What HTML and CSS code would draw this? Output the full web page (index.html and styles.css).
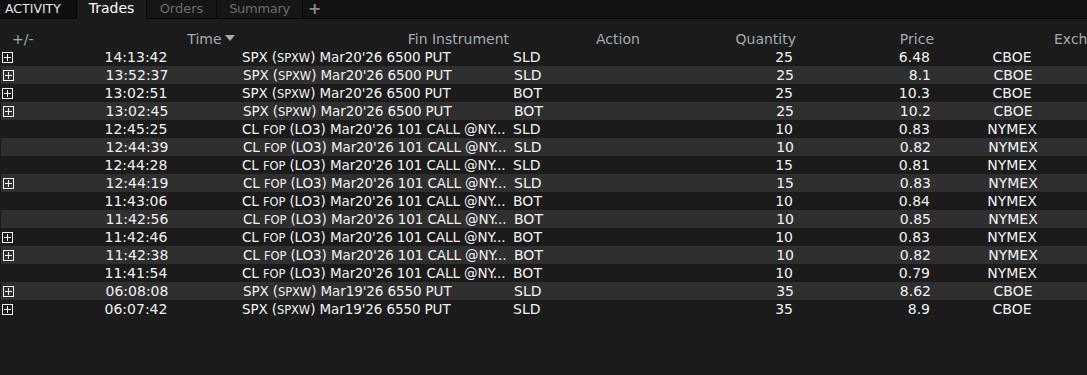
FILE: index.html
```html
<!DOCTYPE html>
<html lang="en">
<head>
  <meta charset="UTF-8">
  <title>Activity - Trades</title>
  <link rel="stylesheet" href="styles.css">
</head>
<body>
  <div class="tabbar">
    <div class="tab title">ACTIVITY</div>
    <div class="tab active">Trades</div>
    <div class="tab">Orders</div>
    <div class="tab wide">Summary</div>
    <div class="tab add">+</div>
  </div>

  <div class="grid">
    <div class="row head">
      <div class="c exp">+/-</div>
      <div class="c time">Time <span class="sort"></span></div>
      <div class="c inst">Fin Instrument</div>
      <div class="c act">Action</div>
      <div class="c qty">Quantity</div>
      <div class="c price">Price</div>
      <div class="c exch">Exchange</div>
    </div>

    <div class="row"><div class="c exp"><span class="plus"></span></div><div class="c time">14:13:42</div><div class="c inst">SPX (<span class="sc">SPXW</span>) Mar20'26 6500 PUT</div><div class="c act">SLD</div><div class="c qty">25</div><div class="c price">6.48</div><div class="c exch">CBOE</div></div>
    <div class="row"><div class="c exp"><span class="plus"></span></div><div class="c time">13:52:37</div><div class="c inst">SPX (<span class="sc">SPXW</span>) Mar20'26 6500 PUT</div><div class="c act">SLD</div><div class="c qty">25</div><div class="c price">8.1</div><div class="c exch">CBOE</div></div>
    <div class="row"><div class="c exp"><span class="plus"></span></div><div class="c time">13:02:51</div><div class="c inst">SPX (<span class="sc">SPXW</span>) Mar20'26 6500 PUT</div><div class="c act">BOT</div><div class="c qty">25</div><div class="c price">10.3</div><div class="c exch">CBOE</div></div>
    <div class="row"><div class="c exp"><span class="plus"></span></div><div class="c time">13:02:45</div><div class="c inst">SPX (<span class="sc">SPXW</span>) Mar20'26 6500 PUT</div><div class="c act">BOT</div><div class="c qty">25</div><div class="c price">10.2</div><div class="c exch">CBOE</div></div>
    <div class="row"><div class="c exp"></div><div class="c time">12:45:25</div><div class="c inst">CL <span class="sc">FOP</span> (LO3) Mar20'26 101 CALL @NY...</div><div class="c act">SLD</div><div class="c qty">10</div><div class="c price">0.83</div><div class="c exch">NYMEX</div></div>
    <div class="row"><div class="c exp"></div><div class="c time">12:44:39</div><div class="c inst">CL <span class="sc">FOP</span> (LO3) Mar20'26 101 CALL @NY...</div><div class="c act">SLD</div><div class="c qty">10</div><div class="c price">0.82</div><div class="c exch">NYMEX</div></div>
    <div class="row"><div class="c exp"></div><div class="c time">12:44:28</div><div class="c inst">CL <span class="sc">FOP</span> (LO3) Mar20'26 101 CALL @NY...</div><div class="c act">SLD</div><div class="c qty">15</div><div class="c price">0.81</div><div class="c exch">NYMEX</div></div>
    <div class="row"><div class="c exp"><span class="plus"></span></div><div class="c time">12:44:19</div><div class="c inst">CL <span class="sc">FOP</span> (LO3) Mar20'26 101 CALL @NY...</div><div class="c act">SLD</div><div class="c qty">15</div><div class="c price">0.83</div><div class="c exch">NYMEX</div></div>
    <div class="row"><div class="c exp"></div><div class="c time">11:43:06</div><div class="c inst">CL <span class="sc">FOP</span> (LO3) Mar20'26 101 CALL @NY...</div><div class="c act">BOT</div><div class="c qty">10</div><div class="c price">0.84</div><div class="c exch">NYMEX</div></div>
    <div class="row"><div class="c exp"></div><div class="c time">11:42:56</div><div class="c inst">CL <span class="sc">FOP</span> (LO3) Mar20'26 101 CALL @NY...</div><div class="c act">BOT</div><div class="c qty">10</div><div class="c price">0.85</div><div class="c exch">NYMEX</div></div>
    <div class="row"><div class="c exp"><span class="plus"></span></div><div class="c time">11:42:46</div><div class="c inst">CL <span class="sc">FOP</span> (LO3) Mar20'26 101 CALL @NY...</div><div class="c act">BOT</div><div class="c qty">10</div><div class="c price">0.83</div><div class="c exch">NYMEX</div></div>
    <div class="row"><div class="c exp"><span class="plus"></span></div><div class="c time">11:42:38</div><div class="c inst">CL <span class="sc">FOP</span> (LO3) Mar20'26 101 CALL @NY...</div><div class="c act">BOT</div><div class="c qty">10</div><div class="c price">0.82</div><div class="c exch">NYMEX</div></div>
    <div class="row"><div class="c exp"></div><div class="c time">11:41:54</div><div class="c inst">CL <span class="sc">FOP</span> (LO3) Mar20'26 101 CALL @NY...</div><div class="c act">BOT</div><div class="c qty">10</div><div class="c price">0.79</div><div class="c exch">NYMEX</div></div>
    <div class="row"><div class="c exp"><span class="plus"></span></div><div class="c time">06:08:08</div><div class="c inst">SPX (<span class="sc">SPXW</span>) Mar19'26 6550 PUT</div><div class="c act">SLD</div><div class="c qty">35</div><div class="c price">8.62</div><div class="c exch">CBOE</div></div>
    <div class="row"><div class="c exp"><span class="plus"></span></div><div class="c time">06:07:42</div><div class="c inst">SPX (<span class="sc">SPXW</span>) Mar19'26 6550 PUT</div><div class="c act">SLD</div><div class="c qty">35</div><div class="c price">8.9</div><div class="c exch">CBOE</div></div>
  </div>
</body>
</html>
```

FILE: styles.css
```css
body {
  margin: 0;
  background: #1b1b1b;
  color: #f2f2f2;
  font-family: "DejaVu Sans", sans-serif;
  font-size: 14px;
  overflow: hidden;
}

.tabbar {
  display: flex;
  height: 18px;
  background: #121212;
  border-bottom: 1px solid #050505;
}

.tab {
  height: 18px;
  line-height: 17px;
  width: 69px;
  text-align: center;
  font-size: 13px;
  color: #6c6c6c;
  background: #161616;
  border-right: 1px solid #0a0a0a;
}

.tab.title {
  width: 71px;
  padding: 0 0 0 5px;
  text-align: left;
  font-size: 12.5px;
  color: #e6e6e6;
  background: #0f0f0f;
  border-right: 1px solid #050505;
}

.tab.active {
  font-size: 14px;
  color: #ffffff;
  background: #1b1b1b;
  height: 19px;
}

.tab.wide {
  width: 85px;
  letter-spacing: -0.3px;
}

.tab.add {
  width: auto;
  padding: 0 6px 0 5px;
  font-size: 16px;
  font-weight: bold;
  color: #8a8a8a;
  background: #121212;
  border-right: none;
}

.grid {
  padding-top: 12px;
}

.row {
  display: flex;
  height: 18px;
  line-height: 18px;
  white-space: nowrap;
}

.row:nth-child(odd) {
  background: #2f2f2f;
  margin-left: 1px;
}

.row.head {
  height: 17px;
  line-height: 17px;
  color: #a2aab3;
  background: none;
  margin: 0;
}

.c {
  overflow: hidden;
}

.exp {
  width: 40px;
  flex: none;
}

.head .exp {
  padding-left: 12px;
  width: 28px;
}

.plus {
  display: inline-block;
  position: relative;
  width: 9px;
  height: 9px;
  border: 1px solid #f2f2f2;
  margin: 4px 0 0 2px;
  vertical-align: top;
}

.plus::before,
.plus::after {
  content: "";
  position: absolute;
  background: #f2f2f2;
}

.plus::before {
  left: 1px;
  top: 4px;
  width: 7px;
  height: 1px;
}

.plus::after {
  left: 4px;
  top: 1px;
  width: 1px;
  height: 7px;
}

.time {
  width: 192px;
  flex: none;
  text-align: center;
}

.head .time {
  width: 195px;
  text-align: right;
}

.sort {
  display: inline-block;
  width: 0;
  height: 0;
  border-left: 5px solid transparent;
  border-right: 5px solid transparent;
  border-top: 6px solid #a2aab3;
  vertical-align: 3px;
  margin-left: -1px;
}

.inst {
  width: 271px;
  flex: none;
  padding-left: 10px;
  font-size: 13.5px;
  letter-spacing: -0.1px;
}

.head .inst {
  padding-left: 0;
  width: 274px;
  text-align: right;
  font-size: 14px;
  letter-spacing: 0;
}

.sc {
  font-size: 11.5px;
}

.act {
  width: 214px;
  flex: none;
  padding-left: 0;
}

.head .act {
  width: 219px;
  padding-left: 87px;
  box-sizing: border-box;
}

.qty {
  width: 66px;
  flex: none;
  text-align: right;
}

.head .qty {
  width: 68px;
}

.price {
  width: 137px;
  flex: none;
  text-align: right;
}

.head .price {
  width: 138px;
}

.exch {
  width: 164px;
  flex: none;
  text-align: center;
}

.head .exch {
  text-align: left;
  padding-left: 120px;
}
```
